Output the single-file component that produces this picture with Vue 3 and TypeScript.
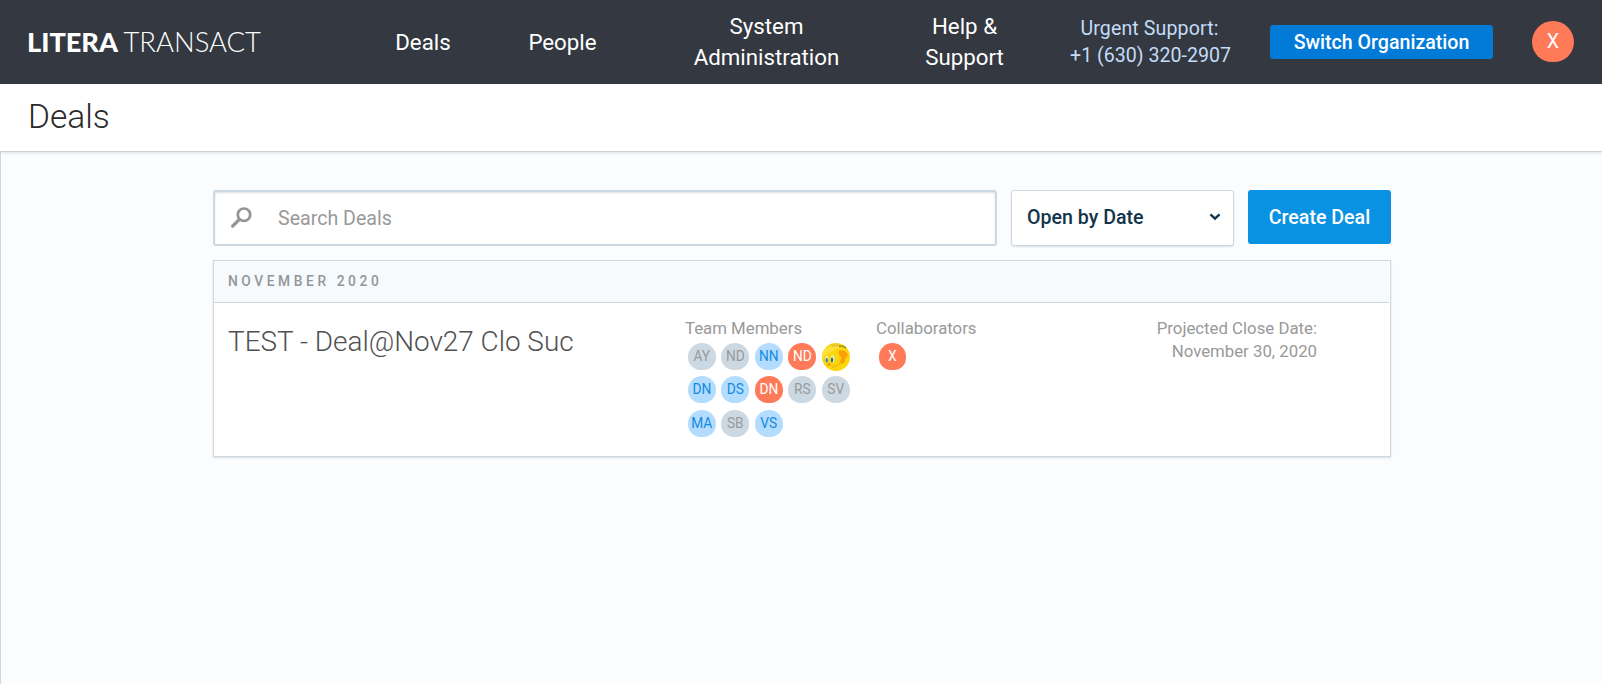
<script setup lang="ts">
interface Member {
  initials: string
  tone: 'grey' | 'blue' | 'coral' | 'photo'
}

const navItems: { label: string[]; width: number }[] = [
  { label: ['Deals'], width: 139 },
  { label: ['People'], width: 140 },
  { label: ['System', 'Administration'], width: 268 },
  { label: ['Help &', 'Support'], width: 128 },
]

const team: Member[] = [
  { initials: 'AY', tone: 'grey' },
  { initials: 'ND', tone: 'grey' },
  { initials: 'NN', tone: 'blue' },
  { initials: 'ND', tone: 'coral' },
  { initials: '', tone: 'photo' },
  { initials: 'DN', tone: 'blue' },
  { initials: 'DS', tone: 'blue' },
  { initials: 'DN', tone: 'coral' },
  { initials: 'RS', tone: 'grey' },
  { initials: 'SV', tone: 'grey' },
  { initials: 'MA', tone: 'blue' },
  { initials: 'SB', tone: 'grey' },
  { initials: 'VS', tone: 'blue' },
]
</script>

<template>
  <div class="app">
    <header class="topbar">
      <svg class="logo" width="240" height="34" viewBox="0 0 240 34">
        <text x="0" y="26.5" class="logo-bold" textLength="91" lengthAdjust="spacingAndGlyphs">LITERA</text>
        <text x="96.5" y="26.5" class="logo-light" textLength="137.5" lengthAdjust="spacingAndGlyphs">TRANSACT</text>
      </svg>
      <nav class="nav">
        <a v-for="item in navItems" :key="item.label[0]" class="nav-item" :style="{ width: item.width + 'px' }">
          <span v-for="line in item.label" :key="line">{{ line }}</span>
        </a>
      </nav>
      <div class="support">
        <span class="support-label">Urgent Support:</span>
        <span>+1 (630) 320-2907</span>
      </div>
      <button class="switch">Switch Organization</button>
      <div class="user"><span>X</span></div>
    </header>

    <div class="titlebar"><h1>Deals</h1></div>

    <main class="content">
      <div class="toolbar">
        <div class="search">
          <svg class="search-icon" width="21" height="21" viewBox="0 0 21 21" fill="none">
            <circle cx="13" cy="7.7" r="6.2" stroke="#929699" stroke-width="2.7" />
            <path d="M8.2 12.6L1.7 19" stroke="#929699" stroke-width="3.3" stroke-linecap="round" />
          </svg>
          <span>Search Deals</span>
        </div>
        <div class="select">
          <span>Open by Date</span>
          <svg width="12" height="8" viewBox="0 0 12 8" fill="none">
            <path d="M1.5 1.4L6 5.6L10.5 1.4" stroke="#12344a" stroke-width="2.4" />
          </svg>
        </div>
        <button class="create">Create Deal</button>
      </div>

      <section class="card">
        <div class="card-head">NOVEMBER 2020</div>
        <div class="deal">
          <h2>TEST - Deal@Nov27 Clo Suc</h2>
          <div class="team">
            <div class="label">Team Members</div>
            <div class="avatars">
              <div v-for="(m, i) in team" :key="i" class="avatar" :class="m.tone">
                <svg v-if="m.tone === 'photo'" width="28" height="28" viewBox="0 0 28 28">
                  <defs>
                    <clipPath id="round"><circle cx="14" cy="14" r="14" /></clipPath>
                  </defs>
                  <g clip-path="url(#round)">
                    <rect width="28" height="28" fill="#fbd60c" />
                    <path d="M0 8Q8 1 18 4Q12 7 8 10Q3 11 0 16Z" fill="#fde13a" />
                    <path d="M9 0L11 4M13 0L12 4M16 1L14 4" stroke="#d3b64a" stroke-width="1" />
                    <path d="M17 3.2Q21 2.5 24.5 5" stroke="#85752a" stroke-width="1.6" fill="none" stroke-dasharray="2 .7" />
                    <path d="M17 8Q22 6 25 10Q27 13 23 16Q24 20 19 21Q17 18 20 15Q16 12 17 8Z" fill="#ff9d08" />
                    <ellipse cx="4.9" cy="16" rx="1.6" ry="3.5" fill="#e8edae" />
                    <ellipse cx="10.6" cy="16" rx="1.8" ry="3.8" fill="#e6efc0" />
                    <ellipse cx="4.8" cy="17.2" rx="1.2" ry="2.3" fill="#3b8a94" />
                    <ellipse cx="10" cy="17" rx="1.2" ry="2.4" fill="#3a6d78" />
                    <path d="M5 21Q7.5 19 9 21.5Q8 23.5 5.5 22.5Z" fill="#fa9b16" />
                    <path d="M10 24Q16 23 19 19" stroke="#edbd0b" stroke-width="1.3" fill="none" />
                  </g>
                </svg>
                <span v-else>{{ m.initials }}</span>
              </div>
            </div>
          </div>
          <div class="collab">
            <div class="label">Collaborators</div>
            <div class="avatars"><div class="avatar coral"><span>X</span></div></div>
          </div>
          <div class="close-date">
            <div>Projected Close Date:</div>
            <div>November 30, 2020</div>
          </div>
        </div>
      </section>
    </main>
  </div>
</template>

<style>
body {
  margin: 0;
  background: #fbfcfe;
}
</style>

<style scoped>
.app {
  box-sizing: border-box;
  height: 684px;
  overflow: hidden;
  display: flex;
  flex-direction: column;
  font-family: Roboto, "Liberation Sans", sans-serif;
}
.app * {
  box-sizing: border-box;
}
.topbar {
  height: 84px;
  flex: none;
  display: flex;
  align-items: center;
  background: #343840;
  padding: 0 28px 0 27px;
}
.logo {
  flex: none;
  fill: #fff;
  font-family: Lato, sans-serif;
  font-size: 27px;
}
.logo-bold {
  font-weight: 900;
}
.logo-light {
  font-weight: 300;
}
.nav {
  display: flex;
  margin-left: 86.5px;
}
.nav-item {
  display: flex;
  flex: none;
  flex-direction: column;
  justify-content: center;
  align-items: center;
  color: #fff;
  font-size: 22.3px;
  line-height: 30.8px;
}
.support {
  flex: none;
  width: 161px;
  margin: 1px 0 0 41.5px;
  display: flex;
  flex-direction: column;
  align-items: center;
  color: #c3dcf8;
  font-size: 19.6px;
  line-height: 26.95px;
}
.support-label {
  letter-spacing: 0.1px;
  margin-right: 2px;
}
button {
  border: 0;
  padding: 0;
  font-family: inherit;
  font-weight: 500;
  font-size: 19.6px;
  color: #fff;
}
.switch {
  flex: none;
  width: 223px;
  height: 34px;
  margin-left: 39px;
  border-radius: 3px;
  background: #027ad8;
}
.user {
  flex: none;
  margin: 0 0 1px auto;
  width: 42px;
  height: 41px;
  overflow: hidden;
  border-radius: 21px 21px 20px 20px;
  background: #ff7a59;
  color: #fff;
  font-size: 19.6px;
  line-height: 41px;
  text-align: center;
}
.titlebar {
  flex: none;
  z-index: 1;
  height: 68px;
  display: flex;
  align-items: center;
  padding: 0 0 2px 28px;
  background: #fff;
  border-bottom: 1px solid #ccd0d5;
  box-shadow: 0 1px 3px rgba(0, 0, 0, 0.12);
}
h1 {
  margin: 0;
  font-size: 33.5px;
  font-weight: 300;
  line-height: 46px;
  color: #2a2a2a;
}
.content {
  flex: 1;
  padding: 38px 211px 0 212px;
  border-left: 1px solid #ccd9e3;
}
.toolbar {
  display: flex;
  align-items: flex-start;
  gap: 14px;
  height: 70px;
}
.search {
  flex: 1;
  height: 56px;
  display: flex;
  align-items: center;
  padding: 0 0 0 15.5px;
  gap: 26.5px;
  border: 2px solid #ccd9e4;
  border-radius: 3px;
  background: #fff;
  box-shadow: inset 0 1px 2px rgba(0, 0, 0, 0.14);
  color: #999;
  font-size: 19.6px;
}
.search-icon {
  margin-bottom: 1px;
}
.select {
  width: 223px;
  height: 56px;
  display: flex;
  align-items: center;
  justify-content: space-between;
  padding: 0 12px 1px 15px;
  border: 1px solid #ccd9e4;
  border-radius: 3px;
  background: #fff;
  box-shadow: 0 1px 2px rgba(0, 0, 0, 0.12);
  color: #12344a;
  font-size: 19.6px;
  font-weight: 500;
}
.select svg {
  margin-bottom: 1px;
}
.create {
  width: 143px;
  height: 54px;
  border-radius: 3px;
  background: #0992e3;
}
.card {
  height: 197px;
  padding-right: 1px;
  border: 1px solid #ccd9e3;
  background: #fff;
  box-shadow: 0 1px 2px rgba(0, 0, 0, 0.12);
}
.card-head {
  height: 42px;
  padding-left: 14px;
  border-bottom: 1px solid #ccd9e3;
  background: #f6fafd;
  color: #929699;
  font-size: 13.75px;
  font-weight: 500;
  letter-spacing: 3.6px;
  line-height: 40px;
}
.deal {
  display: flex;
  align-items: flex-start;
  padding: 14px 72px 0 14px;
  color: #999;
  font-size: 16.8px;
  line-height: 23.1px;
}
h2 {
  flex: none;
  width: 457px;
  margin: 6px 0 0;
  color: #505050;
  font-size: 27.9px;
  font-weight: 300;
  line-height: 38px;
}
.team {
  width: 191px;
}
.avatars {
  display: grid;
  grid-template-columns: repeat(5, 28px);
  grid-auto-rows: 28px;
  gap: 5.4px 5.5px;
  margin: 2.8px 0 0 2.5px;
}
.avatar {
  width: 28px;
  height: 27px;
  padding-left: 0.6px;
  border-radius: 14px 14px 12.5px 12.5px;
  font-size: 13.75px;
  line-height: 27px;
  text-align: center;
}
.grey {
  background: #ccd9e3;
  color: #999;
}
.blue {
  background: #b3dcff;
  color: #128be0;
}
.coral {
  background: #ff7a59;
  color: #fff;
}
.collab .coral {
  width: 27px;
}
.photo {
  height: 28px;
  padding: 0;
}
.photo svg {
  display: block;
}
.close-date {
  margin-left: auto;
  text-align: right;
}
</style>
